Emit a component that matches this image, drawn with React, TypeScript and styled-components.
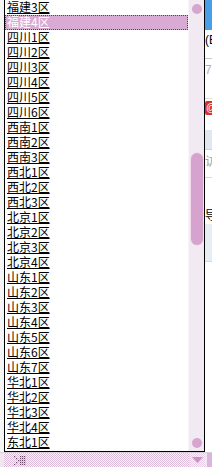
import React from "react";
import styled, { createGlobalStyle } from "styled-components";

const Global = createGlobalStyle`
  html, body { margin: 0; padding: 0; background: #ffffff; }
  body { width: 212px; height: 467px; overflow: hidden; }
`;

const items = [
  "福建3区", "福建4区",
  "四川1区", "四川2区", "四川3区", "四川4区", "四川5区", "四川6区",
  "西南1区", "西南2区", "西南3区",
  "西北1区", "西北2区", "西北3区",
  "北京1区", "北京2区", "北京3区", "北京4区",
  "山东1区", "山东2区", "山东3区", "山东4区", "山东5区", "山东6区", "山东7区",
  "华北1区", "华北2区", "华北3区", "华北4区",
  "东北1区",
];

const Screen = styled.div`
  width: 212px;
  height: 467px;
  display: grid;
  grid-template-rows: 452px 15px;
  overflow: hidden;
  font-family: "Noto Sans CJK SC", "Liberation Sans", sans-serif;
`;

const Top = styled.div`
  display: flex;
  height: 452px;
`;

const LeftFringe = styled.div`
  flex: 0 0 4px;
  background: #f6f6f6;
`;

const ListBox = styled.div`
  flex: 0 0 199px;
  height: 451px;
  display: flex;
  background: #ffffff;
  border-left: 1px solid #000;
  border-right: 1px solid #000;
  border-bottom: 1px solid #000;
`;

const Items = styled.ul`
  flex: 0 0 183px;
  margin: 0;
  padding: 0;
  list-style: none;
  display: flex;
  flex-direction: column;
`;

const Item = styled.li<{ $selected?: boolean }>`
  height: 15px;
  box-sizing: border-box;
  padding-left: 1px;
  font-size: 12px;
  line-height: 12px;
  white-space: nowrap;
  color: ${(p) => (p.$selected ? "#ffffff" : "#000000")};
  background: ${(p) => (p.$selected ? "#d9aad3" : "transparent")};
  border: 1px dotted ${(p) => (p.$selected ? "#5a3a58" : "transparent")};
  text-decoration: ${(p) => (p.$selected ? "none" : "underline")};
  text-decoration-thickness: 1px;
  text-underline-offset: 1px;
`;

const ScrollBar = styled.div`
  flex: 0 0 16px;
  display: flex;
  flex-direction: column;
  align-items: center;
  background: #f1eaf2;
  border-left: 1px solid #f8f4f8;
  box-sizing: border-box;
  padding: 4px 0 3px;
`;

const ArrowDot = styled.div`
  width: 10px;
  height: 10px;
  border-radius: 50%;
  background: #d6a6cf;
  flex: 0 0 auto;
`;

const Track = styled.div`
  flex: 1;
  width: 100%;
  display: flex;
  flex-direction: column;
  align-items: center;
`;

const Thumb = styled.div<{ $offset: number; $size: number }>`
  margin-top: ${(p) => p.$offset}px;
  width: 12px;
  height: ${(p) => p.$size}px;
  box-sizing: border-box;
  border-radius: 6px;
  background: #d5a3cd;
  box-shadow: 0 0 0 1px #f3dcef;
`;

const PageStrip = styled.div`
  flex: 0 0 7px;
  display: flex;
  flex-direction: column;
  overflow: hidden;
  background: #ffffff;
`;

const Block = styled.div<{ $h: number; $bg?: string; $line?: string }>`
  flex: 0 0 ${(p) => p.$h}px;
  background: ${(p) => p.$bg || "#ffffff"};
  border-bottom: ${(p) => (p.$line ? `1px solid ${p.$line}` : "none")};
  box-sizing: border-box;
  overflow: hidden;
  white-space: nowrap;
`;

const Frag = styled.span<{ $color: string; $pt: number }>`
  display: block;
  padding-top: ${(p) => p.$pt}px;
  font-family: "Liberation Sans", "Noto Sans CJK SC", sans-serif;
  font-size: 12px;
  line-height: 12px;
  color: ${(p) => p.$color};
`;

const RedIcon = styled.div`
  width: 12px;
  height: 14px;
  margin-top: 2px;
  border-radius: 2px;
  background: #d8322a;
  color: #fff;
  font-size: 10px;
  line-height: 14px;
  padding-left: 1px;
  font-family: "Liberation Sans", sans-serif;
`;

const Bottom = styled.div`
  display: flex;
  height: 15px;
  border-top: 1px solid #d8d0d8;
  box-sizing: border-box;
`;

const SelectField = styled.div`
  flex: 0 0 189px;
  display: flex;
  align-items: center;
  padding-left: 10px;
  box-sizing: border-box;
  background: repeating-conic-gradient(#dcbcd8 0 25%, #faf4fa 0 50%) 0 0 / 2px 2px;
  border-left: 4px solid #efe6ef;
`;

const DropButton = styled.div`
  flex: 0 0 15px;
  display: flex;
  align-items: center;
  justify-content: center;
  background: repeating-conic-gradient(#e6cce4 0 25%, #fbf3fb 0 50%) 0 0 / 2px 2px;
  border-left: 1px solid #e8d8e8;
`;

const Tail = styled.div`
  flex: 1;
  background: #dcb6da;
  border-left: 2px solid #f4e4f2;
`;

const GripIcon = () => (
  <svg width="13" height="9" viewBox="0 0 13 9">
    {[
      [0, 0], [2, 2], [4, 4], [2, 6], [0, 8],
      [6, 0], [8, 0], [10, 0], [6, 2], [8, 2], [10, 2],
      [6, 4], [8, 4], [10, 4], [6, 6], [8, 6], [10, 6], [6, 8], [8, 8], [10, 8],
    ].map(([x, y], i) => (
      <rect key={i} x={x} y={y} width="1.2" height="1.2" fill="#6a4a66" />
    ))}
  </svg>
);

const Caret = () => (
  <svg width="11" height="6" viewBox="0 0 11 6">
    <path d="M0 0 L5.5 6 L11 0 Z" fill="#cf8fc7" />
  </svg>
);

export default function App() {
  const selected = 1;
  const thumbTop = 139;
  const thumbSize = 92;
  return (
    <>
      <Global />
      <Screen>
        <Top>
          <LeftFringe />
          <ListBox>
            <Items>
              {items.map((t, i) => (
                <Item key={t} $selected={i === selected}>
                  {t}
                </Item>
              ))}
            </Items>
            <ScrollBar>
              <ArrowDot />
              <Track>
                <Thumb $offset={thumbTop} $size={thumbSize} />
              </Track>
              <ArrowDot />
            </ScrollBar>
          </ListBox>
          <PageStrip>
            <Block $h={30} $bg="#4a9ee8" />
            <Block $h={29} $line="#c8c8c8">
              <Frag $color="#000" $pt={4}>(E</Frag>
            </Block>
            <Block $h={40} $line="#e0e0e0">
              <Frag $color="#b0b0b0" $pt={5}>78</Frag>
            </Block>
            <Block $h={18}>
              <RedIcon>@</RedIcon>
            </Block>
            <Block $h={13} />
            <Block $h={20} $bg="#dfe8f0" $line="#c8d4de" />
            <Block $h={28} $line="#d8d8d8">
              <Frag $color="#a0a0a0" $pt={6}>访</Frag>
            </Block>
            <Block $h={46}>
              <Frag $color="#000" $pt={32}>导</Frag>
            </Block>
            <Block $h={38} $bg="#e6edf3" $line="#d0dae2" />
            <Block $h={80} />
            <Block $h={110} />
          </PageStrip>
        </Top>
        <Bottom>
          <SelectField>
            <GripIcon />
          </SelectField>
          <DropButton>
            <Caret />
          </DropButton>
          <Tail />
        </Bottom>
      </Screen>
    </>
  );
}
